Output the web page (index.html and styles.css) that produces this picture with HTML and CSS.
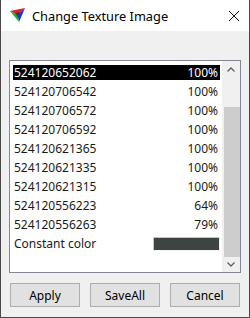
FILE: index.html
```html
<!DOCTYPE html>
<html lang="en">
<head>
    <meta charset="UTF-8">
    <title>Change Texture Image</title>
    <link rel="stylesheet" href="styles.css">
</head>
<body>
    <div class="window">
        <div class="titlebar">
            <svg class="app-icon" width="18" height="16" viewBox="0 0 18 16">
                <polygon points="1,3 16,0 8.5,7" fill="#e0202a"/>
                <polygon points="16,0 10,14 8.5,7" fill="#2030d8"/>
                <polygon points="1,3 10,14 8.5,7" fill="#18b030"/>
                <polygon points="6,5 11,4 8.5,9" fill="#202020" opacity="0.6"/>
            </svg>
            <span class="title">Change Texture Image</span>
            <svg class="close" width="12" height="12" viewBox="0 0 12 12">
                <path d="M1 1 L11 11 M11 1 L1 11" stroke="#111" stroke-width="1"/>
            </svg>
        </div>
        <div class="content">
            <div class="listbox">
                <div class="items">
                    <div class="row selected"><span>524120652062</span><span>100%</span></div>
                    <div class="row"><span>524120706542</span><span>100%</span></div>
                    <div class="row"><span>524120706572</span><span>100%</span></div>
                    <div class="row"><span>524120706592</span><span>100%</span></div>
                    <div class="row"><span>524120621365</span><span>100%</span></div>
                    <div class="row"><span>524120621335</span><span>100%</span></div>
                    <div class="row"><span>524120621315</span><span>100%</span></div>
                    <div class="row"><span>524120556223</span><span>64%</span></div>
                    <div class="row"><span>524120556263</span><span>79%</span></div>
                    <div class="row"><span>Constant color</span><span class="swatch"></span></div>
                </div>
                <div class="scrollbar">
                    <div class="arrow up">
                        <svg width="8" height="5" viewBox="0 0 8 5"><polyline points="0.5,4.5 4,1 7.5,4.5" fill="none" stroke="#606060" stroke-width="1.3"/></svg>
                    </div>
                    <div class="track"></div>
                    <div class="thumb"></div>
                    <div class="arrow down">
                        <svg width="8" height="5" viewBox="0 0 8 5"><polyline points="0.5,0.5 4,4 7.5,0.5" fill="none" stroke="#606060" stroke-width="1.3"/></svg>
                    </div>
                </div>
            </div>
            <div class="buttons">
                <button>Apply</button>
                <button>SaveAll</button>
                <button>Cancel</button>
            </div>
        </div>
    </div>
</body>
</html>
```
FILE: styles.css
```css
body {
    margin: 0;
    font-family: 'Noto Sans', sans-serif;
    font-size: 12px;
    color: #000;
}
.window {
    width: 250px;
    height: 318px;
    box-sizing: border-box;
    border: 1px solid #4a4a4a;
    border-top: none;
    background: #f0f0f0;
    display: flex;
    flex-direction: column;
}
.titlebar {
    height: 31px;
    background: #fff;
    display: flex;
    align-items: center;
}
.app-icon {
    margin-left: 8px;
    margin-top: 1px;
}
.title {
    margin-left: 5px;
    flex: 1;
    font-size: 12.8px;
    color: #000;
}
.close {
    margin-right: 9px;
    margin-top: 1px;
}
.content {
    flex: 1;
    padding: 29px 8px 0 8px;
}
.listbox {
    width: 232px;
    height: 213px;
    box-sizing: border-box;
    border: 1px solid #828790;
    background: #fff;
    display: flex;
}
.items {
    flex: 1;
    padding: 4px 2px 0 3px;
}
.row {
    height: 15px;
    line-height: 15px;
    margin-bottom: 4px;
    padding: 0 2px 0 1px;
    display: flex;
    justify-content: space-between;
    align-items: center;
    color: #1a1a1a;
}
.row.selected {
    background: #000;
    color: #fff;
}
.swatch {
    width: 67px;
    height: 14px;
    box-sizing: border-box;
    background: #3e4441;
    border: 1px solid;
    border-color: #c4c4c4 #f4f4f4 #f4f4f4 #c4c4c4;
    margin-right: -2px;
}
.scrollbar {
    width: 18px;
    background: #f0f0f0;
    display: flex;
    flex-direction: column;
}
.arrow {
    display: flex;
    justify-content: center;
    align-items: center;
}
.arrow.up {
    height: 17px;
}
.arrow.down {
    height: 15px;
}
.track {
    height: 29px;
}
.thumb {
    height: 150px;
    width: 16px;
    margin-left: 2px;
    background: #cdcdcd;
}
.buttons {
    display: flex;
    gap: 10px;
    margin-top: 10px;
    padding-left: 1px;
}
.buttons button {
    width: 70px;
    height: 24px;
    background: #e1e1e1;
    border: 1px solid #adadad;
    font-family: 'Noto Sans', sans-serif;
    font-size: 12px;
    color: #000;
    padding: 0;
}
```
